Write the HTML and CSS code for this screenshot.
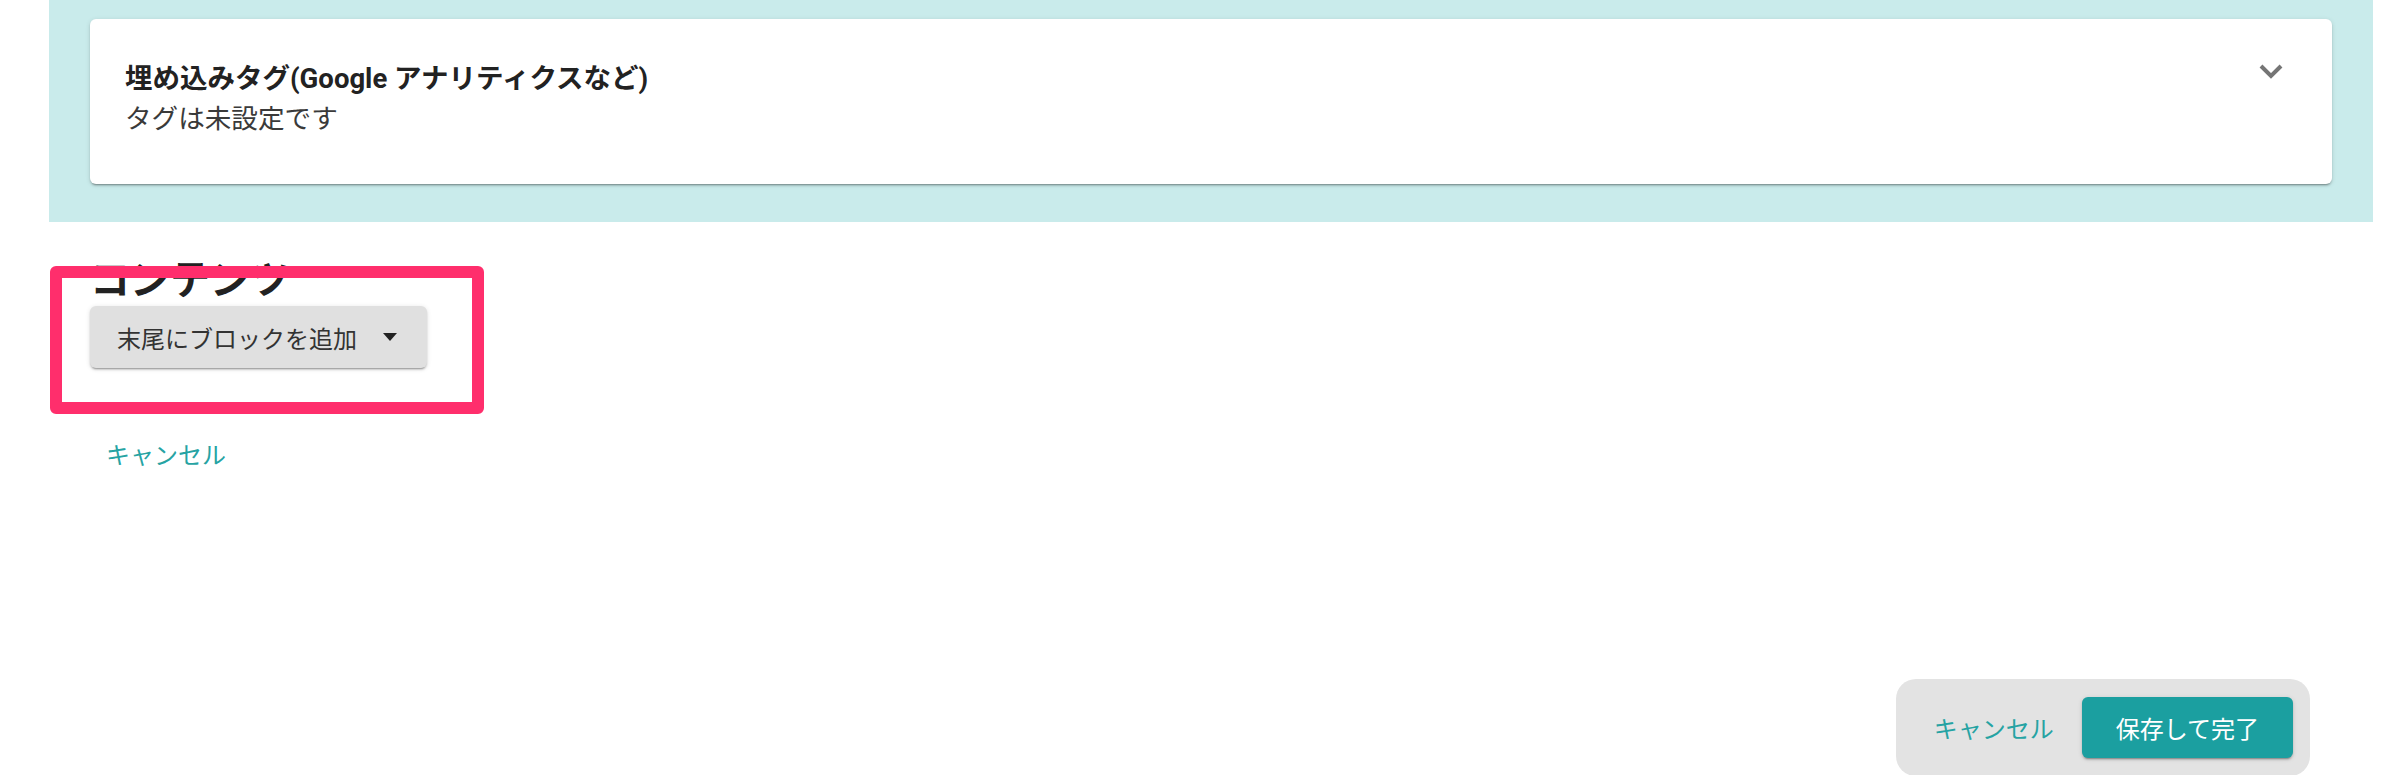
FILE: index.html
```html
<!DOCTYPE html>
<html lang="ja">
<head>
  <meta charset="UTF-8">
  <title>コンテンツ編集</title>
  <link rel="stylesheet" href="styles.css">
</head>
<body>
  <div class="page">
    <div class="panel">
      <div class="card">
        <div class="card-text">
          <div class="card-title">埋め込みタグ(Google アナリティクスなど)</div>
          <div class="card-sub">タグは未設定です</div>
        </div>
        <svg class="chevron" width="24" height="15" viewBox="0 0 24 15">
          <polyline points="2,2 12,12 22,2" fill="none" stroke="#757575" stroke-width="4"/>
        </svg>
      </div>
    </div>

    <div class="contents">
      <h2 class="heading">コンテンツ</h2>
      <button class="add-button">
        <span>末尾にブロックを追加</span>
        <svg width="14" height="8" viewBox="0 0 14 8"><polygon points="0,0 14,0 7,8" fill="#222"/></svg>
      </button>
      <a class="cancel-link" href="#">キャンセル</a>
    </div>
  </div>

  <!-- 注目枠 -->
  <div class="highlight"></div>

  <div class="action-bar">
    <button class="text-button">キャンセル</button>
    <button class="save-button">保存して完了</button>
  </div>
</body>
</html>
```

FILE: styles.css
```css
body {
  margin: 0;
  background: #fff;
  font-family: Roboto, "Noto Sans CJK JP", sans-serif;
  color: #222;
}
.page {
  padding-left: 49px;
  width: 2324px;
}
.panel {
  background: #c9ebeb;
  padding: 19px 41px 38px 41px;
}
.card {
  display: flex;
  justify-content: space-between;
  align-items: flex-start;
  height: 165px;
  box-sizing: border-box;
  background: #fff;
  border-radius: 6px;
  box-shadow: 0 3px 1px -2px rgba(0,0,0,0.2), 0 2px 2px 0 rgba(0,0,0,0.14), 0 1px 5px 0 rgba(0,0,0,0.12);
  padding: 40px 49px 0 35px;
}
.card-title {
  font-size: 27.5px;
  font-weight: 700;
  line-height: 40px;
  color: #222;
}
.card-sub {
  font-size: 26.6px;
  line-height: 40px;
  color: #3a3a3a;
}
.chevron {
  margin-top: 5px;
}
.contents {
  padding-left: 41px;
}
.heading {
  margin: 37px 0 3px 0;
  font-size: 40px;
  font-weight: 700;
  line-height: 44px;
  color: #222;
}
.add-button {
  display: flex;
  align-items: center;
  gap: 26px;
  height: 62px;
  padding: 0 30px 0 27px;
  border: none;
  border-radius: 6px;
  background: #e0e0e0;
  font-family: inherit;
  font-size: 24px;
  color: #333;
  box-shadow: 0 3px 1px -2px rgba(0,0,0,0.2), 0 2px 2px 0 rgba(0,0,0,0.14), 0 1px 5px 0 rgba(0,0,0,0.12);
}
.cancel-link {
  display: inline-block;
  margin: 70px 0 0 16px;
  font-size: 24px;
  line-height: 36px;
  color: #26a3a3;
  text-decoration: none;
}
.highlight {
  position: absolute;
  left: 50px;
  top: 266px;
  width: 434px;
  height: 148px;
  box-sizing: border-box;
  border: 12px solid #ff2e6c;
  border-radius: 6px;
}
.action-bar {
  position: fixed;
  right: 90px;
  top: 679px;
  display: flex;
  align-items: center;
  gap: 6px;
  height: 97px;
  box-sizing: border-box;
  padding: 0 17px 0 16px;
  background: #e3e3e3;
  border-radius: 20px;
}
.text-button {
  height: 61px;
  padding: 0 22px;
  border: none;
  background: transparent;
  font-family: inherit;
  font-size: 24px;
  color: #26a3a3;
}
.save-button {
  height: 61px;
  padding: 0 34px;
  border: none;
  border-radius: 6px;
  background: #1b9fa0;
  font-family: inherit;
  font-size: 24px;
  color: #fff;
  box-shadow: 0 3px 1px -2px rgba(0,0,0,0.2), 0 2px 2px 0 rgba(0,0,0,0.14), 0 1px 5px 0 rgba(0,0,0,0.12);
}
```
